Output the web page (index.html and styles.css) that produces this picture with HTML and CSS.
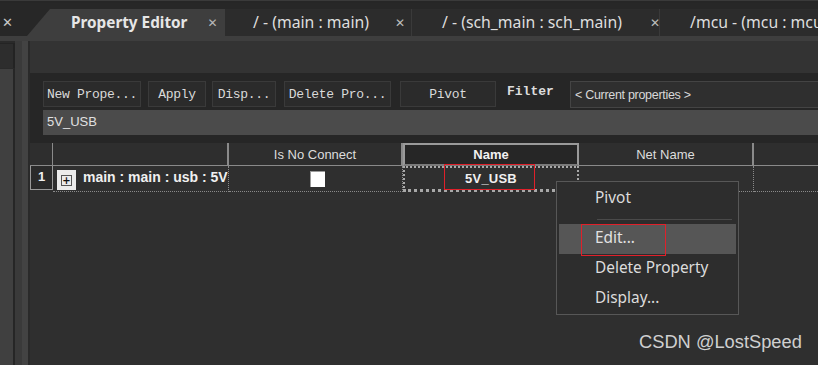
FILE: index.html
```html
<!DOCTYPE html>
<html lang="en">
<head>
  <meta charset="utf-8"/>
  <title>Property Editor</title>
  <link rel="stylesheet" href="styles.css">
</head>
<body>
  <div class="screen">
    <div class="topstrip"></div>

    <div class="tabbar">
      <div class="tab-stub"><span class="close">&#x2715;</span></div>
      <div class="tab active"><span class="tab-label">Property Editor</span><span class="close">&#x2715;</span></div>
      <div class="tab tab-main"><span class="tab-label">/ - (main : main)</span><span class="close">&#x2715;</span></div>
      <div class="tab tab-sch"><span class="tab-label">/ - (sch_main : sch_main)</span><span class="close">&#x2715;</span></div>
      <div class="tab tab-mcu"><span class="tab-label">/mcu - (mcu : mcu)</span></div>
    </div>

    <div class="workspace">
      <div class="leftdock">
        <div class="dock-panel">
          <div class="dock-top"></div>
          <div class="dock-bottom"></div>
        </div>
        <div class="dock-stripe s1"></div>
        <div class="dock-stripe s2"></div>
        <div class="dock-stripe s3"></div>
      </div>

      <div class="editor">
        <div class="blank"></div>

        <div class="toolarea">
          <div class="toolbar">
            <button class="tbtn w-new">New Prope...</button>
            <button class="tbtn w-apply">Apply</button>
            <button class="tbtn w-disp">Disp...</button>
            <button class="tbtn w-del">Delete Pro...</button>
            <button class="tbtn w-pivot">Pivot</button>
            <span class="filter-label">Filter</span>
            <div class="filter-box">&lt; Current properties &gt;</div>
          </div>
          <div class="valuebox">5V_USB</div>
        </div>

        <div class="grid">
          <div class="hcell corner"></div>
          <div class="hcell"></div>
          <div class="hcell">Is No Connect</div>
          <div class="hcell selected">Name</div>
          <div class="hcell">Net Name</div>
          <div class="hcell last"></div>

          <div class="rowhead"><span>1</span></div>
          <div class="cell objname">
            <span class="expander"><span class="plus">+</span></span>
            <span class="objtext">main : main : usb : 5V</span>
          </div>
          <div class="cell center"><span class="checkbox"></span></div>
          <div class="cell namecell">5V_USB</div>
          <div class="cell"></div>
          <div class="cell last"></div>
        </div>

        <div class="gridspace"></div>
      </div>
    </div>

    <div class="mark mark-name"></div>

    <div class="menu">
      <div class="menu-item">Pivot</div>
      <div class="menu-sep"></div>
      <div class="menu-item hot">Edit...</div>
      <div class="menu-item">Delete Property</div>
      <div class="menu-item">Display...</div>
      <div class="mark mark-edit"></div>
    </div>

    <div class="watermark">CSDN @LostSpeed</div>
  </div>
</body>
</html>
```

FILE: styles.css
```css
body {
	margin: 0;
	background-color: #2b2b2b;
	font-family: "Noto Sans", "Open Sans", sans-serif;
	color: #dcdcdc;
}

.screen {
	position: relative;
	width: 818px;
	height: 365px;
	overflow: hidden;
	display: flex;
	flex-direction: column;
}

/* top strip */

.topstrip {
	height: 3px;
	flex: none;
	background-color: #262626;
	border-top: 1px solid #3a3a3a;
	box-sizing: border-box;
}

/* tabs */

.tabbar {
	height: 33px;
	flex: none;
	display: flex;
	align-items: flex-end;
	background-color: #272727;
}

.tab-stub {
	width: 27px;
	height: 27px;
	display: flex;
	align-items: center;
	padding-left: 2px;
	box-sizing: border-box;
}

.tab {
	height: 27px;
	display: flex;
	align-items: center;
	box-sizing: border-box;
	background-color: #2c2c2c;
	border-right: 1px solid #3a3a3a;
	font-size: 15.8px;
	color: #dedede;
	white-space: nowrap;
}

.tab-label {
	margin-top: -2px;
}

.tab.active {
	width: 198px;
	padding-left: 44px;
	background-color: #3e3e3e;
	border-right: none;
	clip-path: polygon(0 100%, 23px 0, 100% 0, 100% 100%);
	font-size: 15.3px;
	font-weight: bold;
	color: #e6e6e6;
}

.tab-main {
	width: 187px;
	padding-left: 28px;
}

.tab-sch {
	width: 248px;
	padding-left: 30px;
}

.tab-mcu {
	flex: 1;
	padding-left: 30px;
	border-right: none;
	overflow: hidden;
}

.close {
	font-size: 12px;
	color: #bdbdbd;
	font-family: "DejaVu Sans", sans-serif;
}

.tab-stub .close {
	color: #c8c8c8;
	font-size: 13px;
}

.tab.active .close {
	margin-left: 20px;
	font-weight: normal;
	color: #b8b8b8;
}

.tab-main .close {
	margin-left: 26px;
}

.tab-sch .close {
	margin-left: 28px;
}

/* workspace */

.workspace {
	flex: 1;
	display: flex;
	border-top: 5px solid #3e3e3e;
}

.leftdock {
	width: 30px;
	flex: none;
	display: flex;
}

.dock-panel {
	width: 15px;
	display: flex;
	flex-direction: column;
	background-color: #2a2a2a;
}

.dock-top {
	height: 24px;
	margin-top: 2px;
	background-color: #2d2d2d;
	border-top: 1px solid #242424;
	border-right: 2px solid #232323;
}

.dock-bottom {
	flex: 1;
	background-color: #404040;
	border-top: 1px solid #2a2a2a;
	border-right: 2px solid #262626;
}

.dock-stripe.s1 {
	width: 7px;
	background-color: #3a3a3a;
}

.dock-stripe.s2 {
	width: 6px;
	background-color: #434343;
}

.dock-stripe.s3 {
	width: 2px;
	background-color: #2a2a2a;
}

.editor {
	flex: 1;
	display: flex;
	flex-direction: column;
	background-color: #2f2f2f;
}

.blank {
	height: 32px;
	background-color: #333333;
}

.toolarea {
	background-color: #262626;
	padding: 8px 0 8px 13px;
}

.toolbar {
	display: flex;
	align-items: stretch;
	height: 27px;
}

.tbtn {
	height: 26px;
	margin-right: 7px;
	padding: 0;
	background-color: #2b2b2b;
	border: 1px solid #3a3a3a;
	color: #dadada;
	font-family: "Liberation Mono", monospace;
	font-size: 13px;
	letter-spacing: -0.3px;
}

.w-new { width: 98px; }
.w-apply { width: 58px; margin-right: 6px; }
.w-disp { width: 64px; margin-right: 8px; }
.w-del { width: 107px; margin-right: 9px; }
.w-pivot { width: 96px; }

.filter-label {
	width: 63px;
	padding-left: 4px;
	font-family: "Liberation Mono", monospace;
	font-size: 13px;
	font-weight: bold;
	color: #dcdcdc;
	line-height: 22px;
}

.filter-box {
	flex: 1;
	background-color: #2f2f2f;
	border: 1px solid #444444;
	border-right: none;
	font-family: "Liberation Sans", sans-serif;
	font-size: 12.5px;
	letter-spacing: -0.3px;
	color: #d8d8d8;
	padding-left: 4px;
	line-height: 26px;
}

.valuebox {
	margin-top: 2px;
	height: 25px;
	background-color: #4b4b4b;
	font-family: "Liberation Sans", sans-serif;
	font-size: 13px;
	color: #e0e0e0;
	padding-left: 4px;
	line-height: 24px;
}

/* grid */

.grid {
	display: grid;
	grid-template-columns: 23px 176px 174px 176px 175px 1fr;
	grid-template-rows: 23px 26px;
	font-family: "Liberation Sans", sans-serif;
	font-size: 13px;
}

.hcell {
	display: flex;
	align-items: center;
	justify-content: center;
	border-right: 2px solid #8a8a8a;
	border-bottom: 1px solid #8a8a8a;
	background-color: #2e2e2e;
	color: #dddddd;
}

.hcell.corner {
	border-right: 1px solid #8a8a8a;
}

.hcell.selected {
	border: 2px solid #9a9a9a;
	border-bottom-color: #7a7a7a;
	background-color: #262626;
	font-weight: bold;
	color: #f2f2f2;
}

.hcell.last,
.cell.last {
	border-right: none;
}

.rowhead {
	display: flex;
	justify-content: center;
	padding-top: 3px;
	box-sizing: border-box;
	height: 24px;
	border: 1px solid #9a9a9a;
	border-top: none;
	background-color: #2a2a2a;
	font-weight: bold;
	color: #f0f0f0;
}

.cell {
	display: flex;
	align-items: center;
	border-right: 1px dotted #8a8a8a;
	border-bottom: 1px dotted #8a8a8a;
	box-sizing: border-box;
}

.cell.center {
	justify-content: center;
}

.objname {
	align-items: flex-start;
	padding: 4px 0 0 4px;
	overflow: hidden;
}

.expander {
	flex: none;
	width: 19px;
	height: 20px;
	display: flex;
	align-items: center;
	justify-content: center;
	background-color: #ececec;
}

.plus {
	width: 9px;
	height: 9px;
	border: 1px solid #555555;
	font-family: "DejaVu Sans", sans-serif;
	font-size: 10px;
	line-height: 9px;
	text-align: center;
	color: #111111;
	font-weight: bold;
}

.objtext {
	margin-left: 7px;
	margin-top: -1px;
	font-size: 14px;
	font-weight: bold;
	color: #f0f0f0;
	white-space: nowrap;
}

.checkbox {
	width: 15px;
	height: 16px;
	margin-left: 4px;
	background-color: #ffffff;
	border-top: 1px solid #9a9a9a;
	border-left: 1px solid #9a9a9a;
	box-sizing: border-box;
}

.namecell {
	justify-content: center;
	align-items: flex-start;
	padding-top: 3px;
	border: 2px dotted #a8a8a8;
	border-bottom-width: 3px;
	font-size: 13px;
	color: #f0f0f0;
	font-weight: bold;
	letter-spacing: 0.2px;
}

.gridspace {
	flex: 1;
}

/* overlays */

.mark {
	position: absolute;
	border: 1px solid #e0202a;
}

.mark-name {
	left: 444px;
	top: 164px;
	width: 89px;
	height: 24px;
}

.menu {
	position: absolute;
	left: 556px;
	top: 181px;
	width: 183px;
	height: 134px;
	box-sizing: border-box;
	padding: 2px 2px 0 2px;
	background-color: #2d2d2d;
	border: 1px solid #575757;
	font-size: 15.4px;
	color: #dcdcdc;
}

.menu-item {
	height: 30px;
	line-height: 28px;
	padding-left: 36px;
}

.menu-sep {
	height: 1px;
	margin: 5px 4px 4px 38px;
	background-color: #4a4a4a;
}

.menu-item.hot {
	background-color: #565656;
	color: #e2e2e2;
}

.mark-edit {
	left: 24px;
	top: 42px;
	width: 83px;
	height: 30px;
}

.watermark {
	position: absolute;
	left: 639px;
	top: 331px;
	font-family: "Liberation Sans", sans-serif;
	font-size: 18.3px;
	color: #d0d0d0;
}
```
